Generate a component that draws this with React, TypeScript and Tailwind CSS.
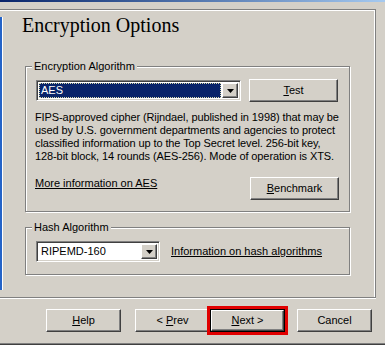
import React from 'react'

const raised =
  'border border-t-white border-l-white border-r-[#404040] border-b-[#404040] shadow-[inset_-1px_-1px_0_#808080]'
const sunken =
  'border border-t-[#808080] border-l-[#808080] border-r-white border-b-white shadow-[inset_1px_1px_0_#404040,inset_-1px_-1px_0_#d4d0c8]'
const etched = 'border border-[#808080] shadow-[inset_1px_1px_0_#fff,1px_1px_0_#fff]'

function Arrow() {
  return (
    <div className={`w-[16px] h-full flex items-center justify-center bg-[#d4d0c8] ${raised}`}>
      <svg width="7" height="4" viewBox="0 0 7 4">
        <path d="M0 0h7L3.5 4z" fill="#000" />
      </svg>
    </div>
  )
}

function Button({ children, className = '' }: { children: React.ReactNode; className?: string }) {
  return (
    <div className={`w-[75px] h-[23px] flex items-center justify-center bg-[#d4d0c8] ${raised} ${className}`}>
      {children}
    </div>
  )
}

function GroupLabel({ text }: { text: string }) {
  return (
    <span className="absolute left-[6px] top-[-7px] px-[2px] bg-[#d4d0c8] leading-[13px]">
      {text}
    </span>
  )
}

export default function App() {
  return (
    <div className="w-[385px] h-[345px] bg-[#d4d0c8] flex flex-col overflow-hidden font-['Liberation_Sans',Arial,sans-serif] text-[11px] text-black">
      {/* title bar edge */}
      <div className="h-[2px] bg-gradient-to-r from-[#0a246a] to-[#a6caf0]" />

      {/* wizard page frame */}
      <div className="mt-[7px] w-[376px] h-[289px] flex border-t border-r border-b border-[#808080] shadow-[inset_0_1px_0_#fff,inset_-1px_0_0_#fff,0_1px_0_#fff]">
        <div className="mt-[7px] h-[273px] w-[3px] bg-[#2463c7] border-r border-white" />

        <div className="flex flex-col">
          <h1 className="pl-[19px] pt-[3px] font-['Liberation_Serif','Times_New_Roman',serif] text-[20px] leading-[24px]">
            Encryption Options
          </h1>

          {/* Encryption Algorithm */}
          <div className={`relative ml-[22px] mt-[29px] w-[325px] h-[146px] ${etched}`}>
            <GroupLabel text="Encryption Algorithm" />
            <div className="pl-[9px] pt-[12px] flex flex-col">
              <div className="flex items-start">
                <div className={`ml-[1px] mt-[1px] w-[205px] h-[21px] flex bg-white ${sunken} p-[2px]`}>
                  <div className="flex-1 mr-[1px] bg-[#0a246a] border border-dotted border-[#d8d8a8] text-white leading-[13px] pl-[1px]">
                    AES
                  </div>
                  <Arrow />
                </div>
                <Button className="ml-[8px] w-[89px] h-[22px]">
                  <span>
                    <u>T</u>est
                  </span>
                </Button>
              </div>

              <p className="mt-[9px] leading-[13px] whitespace-nowrap tracking-[-0.1px]">
                FIPS-approved cipher (Rijndael, published in 1998) that may be
                <br />
                used by U.S. government departments and agencies to protect
                <br />
                classified information up to the Top Secret level. 256-bit key,
                <br />
                128-bit block, 14 rounds (AES-256). Mode of operation is XTS.
              </p>

              <div className="mt-[14px] w-[304px] flex items-start justify-between">
                <span className="underline leading-[13px]">More information on AES</span>
                <Button className="w-[89px] h-[22px]">
                  <span>
                    <u>B</u>enchmark
                  </span>
                </Button>
              </div>
            </div>
          </div>

          {/* Hash Algorithm */}
          <div className={`relative ml-[22px] mt-[15px] w-[325px] h-[48px] ${etched}`}>
            <GroupLabel text="Hash Algorithm" />
            <div className="pl-[10px] pt-[13px] flex items-center">
              <div className={`w-[124px] h-[21px] flex bg-white ${sunken} p-[2px]`}>
                <div className="flex-1 leading-[15px] pl-[2px]">RIPEMD-160</div>
                <Arrow />
              </div>
              <span className="ml-[11px] underline leading-[13px]">Information on hash algorithms</span>
            </div>
          </div>
        </div>
      </div>

      {/* wizard buttons */}
      <div className="mt-[11px] flex">
        <Button className="ml-[46px]">
          <span>
            <u>H</u>elp
          </span>
        </Button>
        <Button className="ml-[14px]">
          <span>
            &lt; <u>P</u>rev
          </span>
        </Button>
        <div className="w-[75px] h-[23px] border border-black outline-[3px] outline-solid outline-[#e00000]">
          <Button className="w-full h-full">
            <span>
              <u>N</u>ext &gt;
            </span>
          </Button>
        </div>
        <Button className="ml-[12px]">
          <span>Cancel</span>
        </Button>
      </div>

      <div className="mt-auto h-[2px] border-t border-[#808080] bg-[#404040]" />
    </div>
  )
}
